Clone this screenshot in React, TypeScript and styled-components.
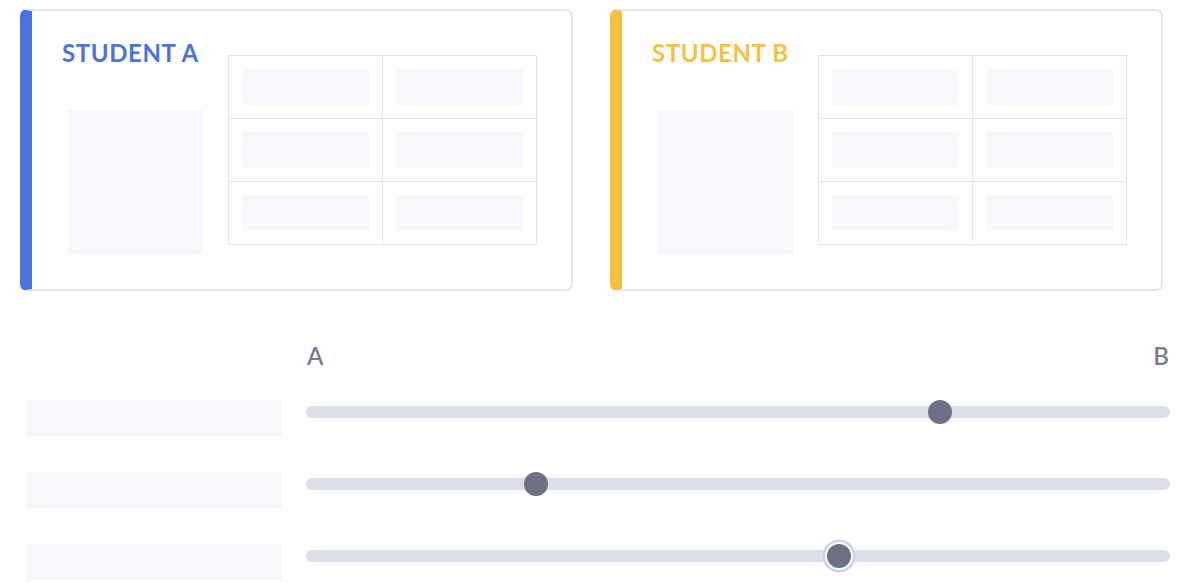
import React from "react";
import {createGlobalStyle, styled} from "styled-components";

const GlobalStyle = createGlobalStyle`
  html, body {
    margin: 0;
    padding: 0;
    background: #ffffff;
    font-family: Lato, "Open Sans", sans-serif;
  }
`;

const Page = styled.div`
  width: 1191px;
  padding: 9px 0 0 20px;
  box-sizing: border-box;
`;

const CardRow = styled.div`
  display: flex;
  gap: 37px;
`;

const Card = styled.div<{ $accent: string }>`
  width: 553px;
  height: 282px;
  box-sizing: border-box;
  border: 2px solid #e4e4f0;
  border-left: 12px solid ${props => props.$accent};
  border-radius: 7px;
  display: flex;
  align-items: flex-start;
  background: #fff;
`;

const InfoColumn = styled.div`
  width: 166px;
  padding: 26px 0 0 30px;
  display: flex;
  flex-direction: column;
`;

const Title = styled.h2<{ $accent: string }>`
  margin: 0;
  font-size: 24px;
  line-height: 32px;
  font-weight: 700;
  letter-spacing: 0.6px;
  color: ${props => props.$accent};
  white-space: nowrap;
`;

const Photo = styled.div`
  margin: 41px 0 0 6px;
  width: 135px;
  height: 144px;
  background: #f7f8fc;
`;

const Table = styled.div`
  margin-top: 44px;
  display: grid;
  grid-template-columns: 154px 154px;
  grid-auto-rows: 63px;
  border-top: 1px solid #e4e4f0;
  border-left: 1px solid #e4e4f0;
`;

const Cell = styled.div`
  border-right: 1px solid #e4e4f0;
  border-bottom: 1px solid #e4e4f0;
  padding: 13px 13px 0 13px;
`;

const CellFill = styled.div`
  height: 36px;
  background: #f7f8fc;
`;

const Scales = styled.div`
  margin-top: 49px;
  display: grid;
  grid-template-columns: 256px 864px;
  column-gap: 24px;
  row-gap: 36px;
  padding-left: 6px;
`;

const Ends = styled.div`
  grid-column: 2;
  display: flex;
  justify-content: space-between;
  font-size: 24px;
  line-height: 32px;
  font-weight: 600;
  color: #7a7b8e;
  margin-bottom: -8px;
  padding: 0 1px;
`;

const Label = styled.div`
  height: 36px;
  background: #f7f8fc;
`;

const Slider = styled.div`
  position: relative;
  height: 24px;
  display: flex;
  align-items: center;
`;

const Track = styled.div`
  width: 100%;
  height: 12px;
  border-radius: 6px;
  background: #dcdee9;
`;

const Thumb = styled.div<{ $focused?: boolean }>`
  position: absolute;
  top: 0;
  width: 24px;
  height: 24px;
  border-radius: 50%;
  background: #6f7083;
  transform: translateX(-50%);
  box-shadow: ${props => props.$focused ? "0 0 0 2px #ffffff, 0 0 0 4.5px #c8d3f3" : "none"};
`;

const students = [
    {name: "STUDENT A", accent: "#4b72de"},
    {name: "STUDENT B", accent: "#f6c140"},
];

const scales = [
    {value: 0.7405},
    {value: 0.2595},
    {value: 0.62, focused: true},
];

export default function App() {
    return (
        <Page>
            <GlobalStyle/>
            <CardRow>
                {students.map(s => (
                    <Card key={s.name} $accent={s.accent}>
                        <InfoColumn>
                            <Title $accent={s.accent}>{s.name}</Title>
                            <Photo/>
                        </InfoColumn>
                        <Table>
                            {Array.from({length: 6}).map((_, i) => (
                                <Cell key={i}><CellFill/></Cell>
                            ))}
                        </Table>
                    </Card>
                ))}
            </CardRow>
            <Scales>
                <Ends><span>A</span><span>B</span></Ends>
                {scales.map((s, i) => (
                    <React.Fragment key={i}>
                        <Label/>
                        <Slider>
                            <Track/>
                            <Thumb
                                $focused={s.focused}
                                style={{left: `calc(12px + (100% - 24px) * ${s.value})`}}
                            />
                        </Slider>
                    </React.Fragment>
                ))}
            </Scales>
        </Page>
    );
}
